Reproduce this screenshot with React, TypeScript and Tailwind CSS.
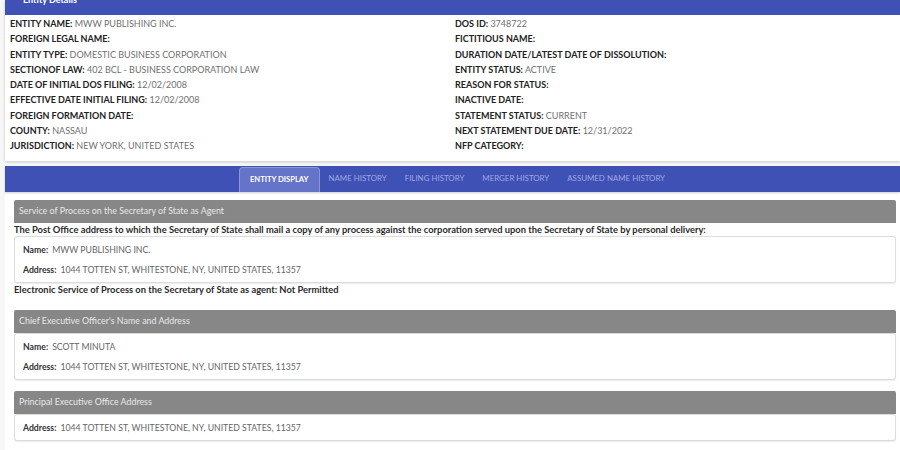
import React from 'react';

const leftFields: [string, string][] = [
  ['ENTITY NAME:', 'MWW PUBLISHING INC.'],
  ['FOREIGN LEGAL NAME:', ''],
  ['ENTITY TYPE:', 'DOMESTIC BUSINESS CORPORATION'],
  ['SECTIONOF LAW:', '402 BCL - BUSINESS CORPORATION LAW'],
  ['DATE OF INITIAL DOS FILING:', '12/02/2008'],
  ['EFFECTIVE DATE INITIAL FILING:', '12/02/2008'],
  ['FOREIGN FORMATION DATE:', ''],
  ['COUNTY:', 'NASSAU'],
  ['JURISDICTION:', 'NEW YORK, UNITED STATES'],
];

const rightFields: [string, string][] = [
  ['DOS ID:', '3748722'],
  ['FICTITIOUS NAME:', ''],
  ['DURATION DATE/LATEST DATE OF DISSOLUTION:', ''],
  ['ENTITY STATUS:', 'ACTIVE'],
  ['REASON FOR STATUS:', ''],
  ['INACTIVE DATE:', ''],
  ['STATEMENT STATUS:', 'CURRENT'],
  ['NEXT STATEMENT DUE DATE:', '12/31/2022'],
  ['NFP CATEGORY:', ''],
];

const tabs = ['ENTITY DISPLAY', 'NAME HISTORY', 'FILING HISTORY', 'MERGER HISTORY', 'ASSUMED NAME HISTORY'];

const Field = ({ label, value }: { label: string; value: string }) => (
  <div className="h-[15.3px] leading-[15.3px] whitespace-nowrap">
    <span className="font-bold text-[#222]">{label}</span>
    {value && <span className="text-[#707070]"> {value}</span>}
  </div>
);

const Section = ({ title, children }: { title: string; children: React.ReactNode }) => (
  <div>
    <div className="h-[23px] bg-[#878787] rounded-t-[2px] px-[5px] flex items-center text-[8.9px] text-[#e8e8e8]">
      {title}
    </div>
    {children}
  </div>
);

const InfoBox = ({ rows }: { rows: [string, string][] }) => (
  <div className="border border-[#dcdcdc] rounded-[3px] bg-white px-[8px] pt-[3px] pb-[2px] shadow-[0_1px_1px_rgba(0,0,0,0.08)]">
    {rows.map(([k, v]) => (
      <div key={k + v} className="h-[20px] flex items-center text-[8.7px] whitespace-nowrap">
        <span className="font-bold text-[#333]">{k}</span>
        <span className="text-[#666] ml-[4px]">{v}</span>
      </div>
    ))}
  </div>
);

const App: React.FC = () => {
  return (
    <div className="w-[900px] h-[450px] overflow-hidden bg-[#f7f7f7] pl-[5px]" style={{ fontFamily: 'Lato, "Open Sans", sans-serif' }}>
      <div className="bg-white shadow-[0_1px_3px_rgba(0,0,0,0.2)]">
        <div className="h-[15px] bg-[#3f51b5] overflow-hidden">
          <div className="text-white text-[9px] font-bold pl-[18px] leading-[9px] -mt-[5px]">Entity Details</div>
        </div>
        <div className="grid grid-cols-[445px_1fr] pl-[5px] pt-[1px] pb-[7px] text-[9px]">
          <div>
            {leftFields.map(([k, v]) => <Field key={k} label={k} value={v} />)}
          </div>
          <div>
            {rightFields.map(([k, v]) => <Field key={k} label={k} value={v} />)}
          </div>
        </div>
      </div>

      <div className="mt-[5px] bg-white pb-[30px]">
        <div className="h-[26px] bg-[#3f51b5] flex items-end pl-[234px] shadow-[0_1px_2px_rgba(0,0,0,0.2)]">
          {tabs.map((t, i) => (
            <div
              key={t}
              className={
                i === 0
                  ? 'h-[25px] px-[10px] flex items-center bg-[#6574c8] rounded-t-[4px] border-t border-x border-[#8a96d6] text-white font-bold text-[7.6px]'
                  : 'h-[25px] px-[9px] flex items-center text-[#9fa8e0] text-[7.9px]'
              }
            >
              {t}
            </div>
          ))}
        </div>

        <div className="pl-[9px] pr-[4px] pt-[8px]">
          <Section title="Service of Process on the Secretary of State as Agent">
            <div className="h-[13px] leading-[13px] text-[9.35px] font-bold text-[#2b2b2b] whitespace-nowrap">
              The Post Office address to which the Secretary of State shall mail a copy of any process against the corporation served upon the Secretary of State by personal delivery:
            </div>
            <InfoBox rows={[['Name:', 'MWW PUBLISHING INC.'], ['Address:', '1044 TOTTEN ST, WHITESTONE, NY, UNITED STATES, 11357']]} />
            <div className="h-[13px] leading-[13px] text-[9.35px] font-bold text-[#2b2b2b] whitespace-nowrap">
              Electronic Service of Process on the Secretary of State as agent: Not Permitted
            </div>
          </Section>

          <div className="mt-[14px]">
            <Section title="Chief Executive Officer's Name and Address">
              <InfoBox rows={[['Name:', 'SCOTT MINUTA'], ['Address:', '1044 TOTTEN ST, WHITESTONE, NY, UNITED STATES, 11357']]} />
            </Section>
          </div>

          <div className="mt-[11px]">
            <Section title="Principal Executive Office Address">
              <InfoBox rows={[['Address:', '1044 TOTTEN ST, WHITESTONE, NY, UNITED STATES, 11357']]} />
            </Section>
          </div>
        </div>
      </div>
    </div>
  );
};

export default App;
